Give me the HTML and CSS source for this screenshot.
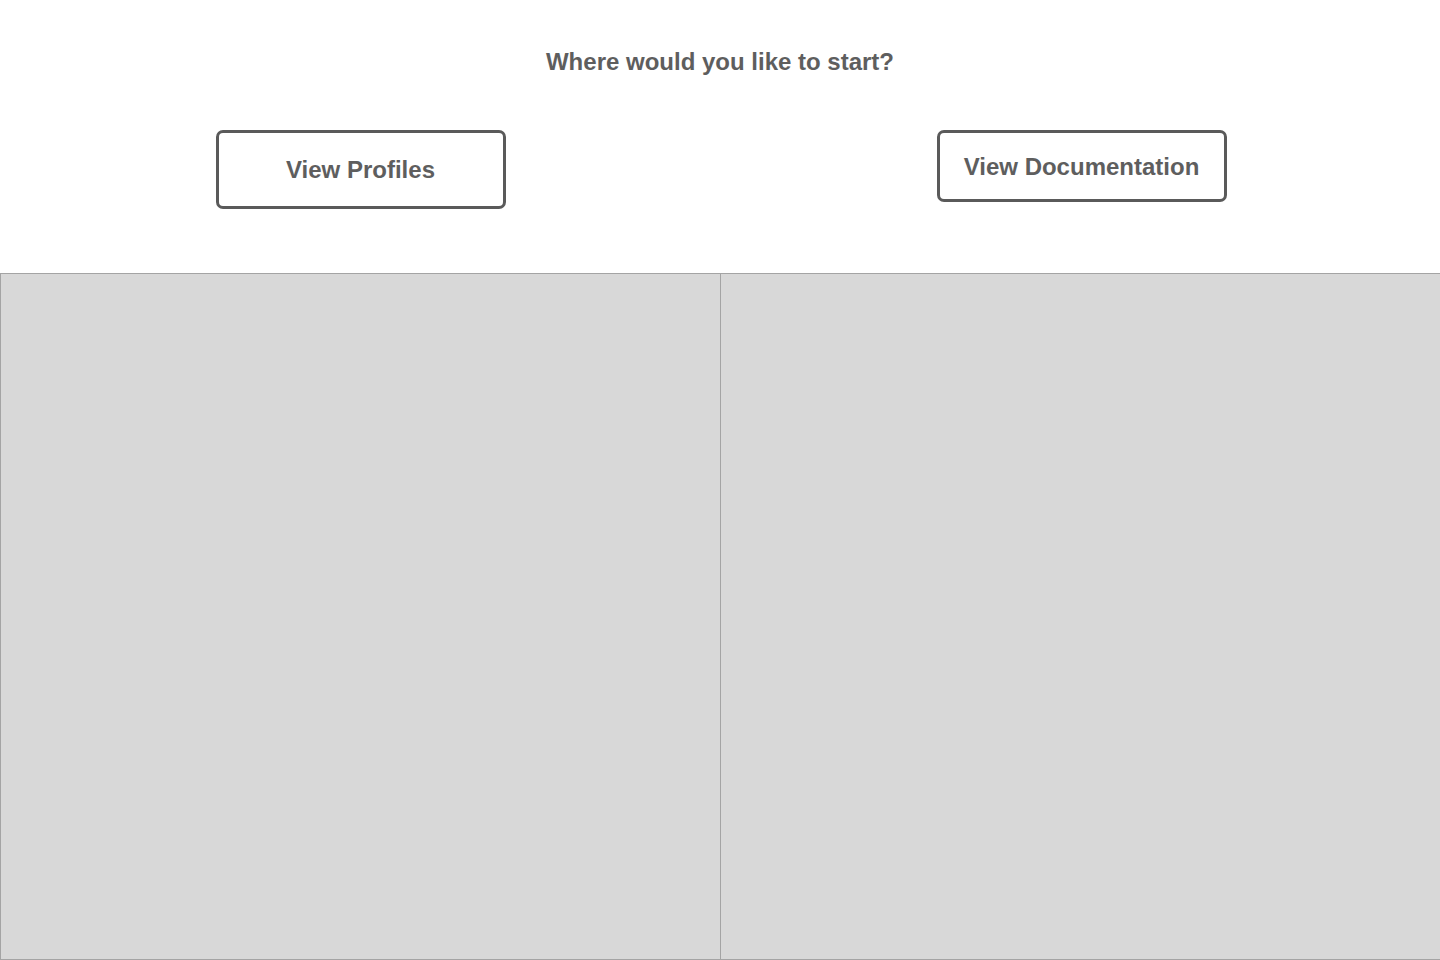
FILE: index.html
```html
<!DOCTYPE html>
<html>
<head>
<meta charset="utf-8">
<link rel="stylesheet" href="styles.css">
</head>
<body>
<div class="page">
  <header class="intro">
    <h1 class="title">Where would you like to start?</h1>
    <div class="choices">
      <div class="choice"><button class="btn btn-profiles">View Profiles</button></div>
      <div class="choice"><button class="btn btn-docs">View Documentation</button></div>
    </div>
  </header>
  <main class="panels">
    <section class="panel panel-left"></section>
    <section class="panel panel-right"></section>
  </main>
</div>
</body>
</html>
```
FILE: styles.css
```css
html, body {
  margin: 0;
  padding: 0;
  background: #ffffff;
}
.page {
  width: 1440px;
  height: 960px;
  display: flex;
  flex-direction: column;
  font-family: "Liberation Sans", Arial, Helvetica, sans-serif;
  color: #5e5e5e;
}
.intro {
  height: 273px;
  box-sizing: border-box;
  padding-top: 48px;
}
.title {
  margin: 0;
  text-align: center;
  font-size: 24px;
  font-weight: bold;
  line-height: 28px;
}
.choices {
  display: grid;
  grid-template-columns: 1fr 1fr;
  margin-top: 54px;
  align-items: start;
}
.choice {
  display: flex;
  justify-content: center;
}
.btn {
  width: 290px;
  box-sizing: border-box;
  background: #ffffff;
  border: 3px solid #5a5a5a;
  border-radius: 7px;
  font-family: inherit;
  font-size: 24px;
  font-weight: bold;
  color: #5e5e5e;
  padding: 0;
}
.btn-profiles {
  height: 79px;
}
.btn-docs {
  height: 72px;
  padding-top: 2px;
}
.choice:first-child .btn { margin-left: 1px; }
.choice:last-child .btn { margin-left: 3px; }
.panels {
  flex: 1;
  display: grid;
  grid-template-columns: 721px 1fr;
  border-top: 1px solid #a4a4a4;
  border-bottom: 1px solid #a4a4a4;
}
.panel {
  background: #d8d8d8;
}
.panel-left {
  border-left: 1px solid #a4a4a4;
  border-right: 1px solid #a4a4a4;
}
```
